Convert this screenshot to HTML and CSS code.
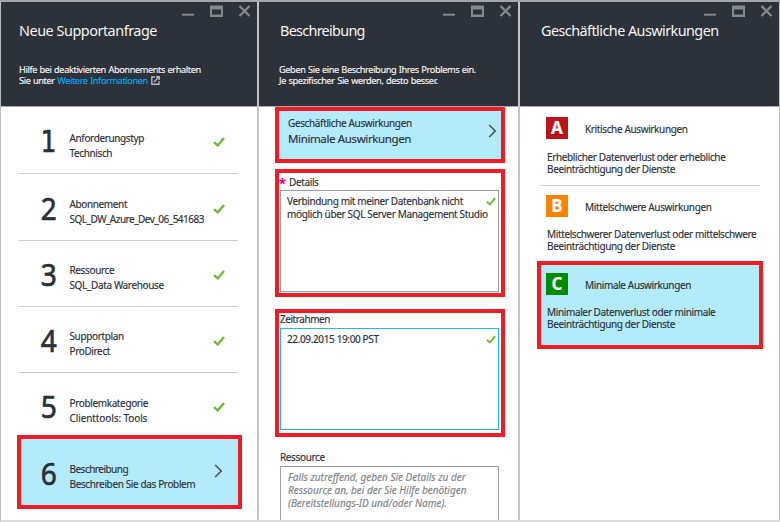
FILE: index.html
```html
<!DOCTYPE html>
<html lang="de">
<head>
<meta charset="utf-8">
<title>Neue Supportanfrage</title>
<link rel="stylesheet" href="styles.css">
</head>
<body>
<svg class="defs" width="0" height="0">
  <symbol id="controls" viewBox="0 0 70 12">
    <path d="M1 9.7h12" stroke="#85888c" stroke-width="2"/>
    <path d="M30 1v10.5h11V1" fill="none" stroke="#85888c" stroke-width="2"/>
    <path d="M29 2.5h13" stroke="#85888c" stroke-width="4"/>
    <path d="M29 10.5h13" stroke="#85888c" stroke-width="2"/>
    <path d="M58.5 1l10 10M68.5 1l-10 10" stroke="#85888c" stroke-width="2.3"/>
  </symbol>
  <symbol id="check" viewBox="0 0 12 10">
    <path d="M1 5.2l3.7 3.2L11 .9" fill="none" stroke="#72b83c" stroke-width="2.4"/>
  </symbol>
  <symbol id="chevron" viewBox="0 0 9 14">
    <path d="M1.2 1l6 6-6 6" fill="none" stroke="#4b565c" stroke-width="1.7"/>
  </symbol>
</svg>
<main class="blades">
  <section class="blade">
    <header class="head">
      <svg class="controls"><use href="#controls"/></svg>
      <h1 class="title">Neue Supportanfrage</h1>
      <p class="intro">Hilfe bei deaktivierten Abonnements erhalten<br>Sie unter <a class="link">Weitere Informationen</a>
        <svg class="ext" viewBox="0 0 9 9"><path d="M4 1H.8v7.2H8V5.2" fill="none" stroke="#b5b8bb" stroke-width="1.4"/><path d="M5 .8h3.2V4M8 1L3 6" fill="none" stroke="#b5b8bb" stroke-width="1.4"/></svg></p>
    </header>
    <ol class="steps">
      <li class="step"><b class="num one">1</b><div class="info"><p>Anforderungstyp</p><p>Technisch</p></div><svg class="check"><use href="#check"/></svg></li>
      <li class="step"><b class="num">2</b><div class="info"><p>Abonnement</p><p class="tight">SQL_DW_Azure_Dev_06_541683</p></div><svg class="check"><use href="#check"/></svg></li>
      <li class="step"><b class="num">3</b><div class="info"><p>Ressource</p><p>SQL_Data Warehouse</p></div><svg class="check"><use href="#check"/></svg></li>
      <li class="step"><b class="num">4</b><div class="info"><p>Supportplan</p><p>ProDirect</p></div><svg class="check"><use href="#check"/></svg></li>
      <li class="step last"><b class="num">5</b><div class="info"><p>Problemkategorie</p><p class="loose">Clienttools: Tools</p></div><svg class="check"><use href="#check"/></svg></li>
      <li class="step current"><b class="num">6</b><div class="info"><p class="tight">Beschreibung</p><p>Beschreiben Sie das Problem</p></div><svg class="chevron"><use href="#chevron"/></svg></li>
    </ol>
  </section>

  <section class="blade">
    <header class="head second">
      <svg class="controls"><use href="#controls"/></svg>
      <h1 class="title narrow">Beschreibung</h1>
      <p class="intro">Geben Sie eine Beschreibung Ihres Problems ein.<br>Je spezifischer Sie werden, desto besser.</p>
    </header>
    <div class="form">
      <div class="impact">
        <div><p>Geschäftliche Auswirkungen</p><p class="value">Minimale Auswirkungen</p></div>
        <svg class="chevron"><use href="#chevron"/></svg>
      </div>
      <div class="field details">
        <label class="label"><span class="star">*</span>Details</label>
        <div class="box"><p>Verbindung mit meiner Datenbank nicht<br><span class="wide">möglich über SQL Server Management Studio</span></p><svg class="tick"><use href="#check"/></svg></div>
      </div>
      <div class="field time">
        <label class="label">Zeitrahmen</label>
        <div class="box focus"><p>22.09.2015 19:00 PST</p><svg class="tick"><use href="#check"/></svg></div>
      </div>
      <div class="field plain">
        <label class="label">Ressource</label>
        <div class="box hint"><p>Falls zutreffend, geben Sie Details zu der<br>Ressource an, bei der Sie Hilfe benötigen<br>(Bereitstellungs-ID und/oder Name).</p></div>
      </div>
    </div>
  </section>

  <section class="blade">
    <header class="head third">
      <svg class="controls"><use href="#controls"/></svg>
      <h1 class="title">Geschäftliche Auswirkungen</h1>
    </header>
    <ul class="levels">
      <li class="level a"><div class="row"><b class="badge">A</b><span>Kritische Auswirkungen</span></div><p>Erheblicher Datenverlust oder erhebliche<br>Beeinträchtigung der Dienste</p></li>
      <li class="level b"><div class="row"><b class="badge">B</b><span>Mittelschwere Auswirkungen</span></div><p>Mittelschwerer Datenverlust oder mittelschwere<br>Beeinträchtigung der Dienste</p></li>
      <li class="level c"><div class="row"><b class="badge">C</b><span>Minimale Auswirkungen</span></div><p>Minimaler Datenverlust oder minimale<br>Beeinträchtigung der Dienste</p></li>
    </ul>
  </section>
</main>
</body>
</html>
```
FILE: styles.css
```css
* { box-sizing: border-box; margin: 0; padding: 0; }
body {
  width: 780px; height: 522px; overflow: hidden; background: #fff;
  font: 10px/15px "Noto Sans", sans-serif; letter-spacing: -.37px; color: #2b3037;
  -webkit-text-stroke-width: .15px;
}
ol, ul { list-style: none; }
svg { display: block; flex: none; }
.defs { position: absolute; }
.blades {
  display: grid; grid-template-columns: 258px 261px 260px; height: 522px;
  border: solid #b9bcbe; border-width: 2px 0 2px 1px; border-top-color: #a4a7aa; border-bottom-color: #dcdcdc; overflow: hidden;
}
.blade { border-right: 2px solid #c4c4c4; overflow: hidden; min-width: 0; }
.blade:last-child { border-right-width: 1px; }

.head {
  height: 105px; margin-right: -2px; padding: 3px 8px 0 18px; background: #2d3139; color: #f4f5f6;
  border: solid #4d5259; border-width: 0 2px 1px 0; border-bottom-color: #a9abae;
  font-size: 9.2px; line-height: 11px; letter-spacing: -.38px; word-spacing: .5px;
}
.blade:last-child .head { margin-right: 0; border-right: 0; }
.head.second { padding-left: 20px; }
.head.third { padding-left: 21px; }
.controls { width: 70px; height: 12px; margin-left: auto; margin-right: -2px; }
.title { margin-top: 3px; font-size: 14.4px; line-height: 22px; font-weight: 400; letter-spacing: -.46px; word-spacing: 0; white-space: nowrap; -webkit-text-stroke-width: 0; }
.title.narrow { letter-spacing: -.7px; padding-left: 1px; }
.third .title { letter-spacing: -.55px; }
.intro { margin-top: 22px; white-space: nowrap; }
.link { color: #00abec; letter-spacing: -.4px; }
.ext { display: inline-block; width: 9px; height: 9px; vertical-align: -1px; margin-left: 1px; }

.steps { padding: 1px 0 0 18px; }
.step {
  display: grid; grid-template-columns: 50.5px 143.5px 12px; height: 66.25px; width: 219px;
  border-bottom: 1px solid #cfcfcf;
}
.step.last { border-bottom: 0; }
.num {
  font-size: 30.5px; line-height: 30px; font-weight: 400; letter-spacing: 0; padding: 18.3px 0 0 21px;
  transform: scaleX(.92); transform-origin: 30px 0; -webkit-text-stroke-width: .7px;
}
.num.one { font-family: "DejaVu Sans Condensed", "DejaVu Sans", sans-serif; font-size: 29.5px; font-stretch: condensed; padding-top: 19px; }
.info { padding-top: 22.7px; white-space: nowrap; }
.tight { letter-spacing: -.51px; }
.loose { letter-spacing: -.1px; }
.check { width: 12px; height: 10px; margin-top: 29.3px; }
.current {
  width: 225px; height: 74px; margin: -4px 0 0 -2px;
  border: 4px solid #ee1c24; background: #b3ebfb; grid-template-columns: 48.5px 143.5px 12px;
}
.current .num { padding-left: 19px; transform-origin: 28px 0; }
.current .chevron { margin: 25px 0 0 1px; }
.chevron { width: 9px; height: 14px; }

.form { display: flex; flex-direction: column; padding-left: 16px; width: 246px; }
.impact {
  height: 56px; display: flex; justify-content: space-between;
  padding: 5px 4px 0 9px; border: 4px solid #ee1c24; background: #b3ebfb; line-height: 15px;
}
.impact .value { font-size: 11.5px; line-height: 16px; letter-spacing: -.37px; }
.impact .chevron { margin-top: 8px; }
.field { display: flex; flex-direction: column; }
.details, .time { border: 4px solid #ee1c24; height: 128px; padding: 0 2px 0 1px; }
.details { margin-top: 6px; }
.time { margin-top: 12px; }
.plain { margin-top: 13px; padding: 0 6px 0 5px; }
.label { line-height: 15px; height: 16px; }
.details .label { height: 17px; padding-top: 2px; }
.time .label { height: 15px; line-height: 13px; letter-spacing: -.44px; }
.star { display: inline-block; width: 9px; color: #ec008c; font-size: 13px; font-weight: 700; line-height: 10px; vertical-align: -2px; margin-left: -1px; margin-right: 1px; }
.box {
  display: flex; justify-content: space-between; height: 102px; padding: 4px 2px 0 6px;
  border: 1px solid #9b9fa3; background: #fff; line-height: 13px; white-space: nowrap;
}
.box.focus { border-color: #1fb8ec; }
.wide { letter-spacing: -.34px; }
.tick { width: 10px; height: 9px; margin: 2px 0 0 -6px; }
.hint { font-style: italic; letter-spacing: -.02px; color: #808386; padding-left: 7px; }

.levels { padding-left: 20px; line-height: 12px; white-space: nowrap; }
.level { width: 220px; padding-left: 6px; }
.level p { padding-left: 1px; margin-top: 11px; }
.row { display: flex; align-items: center; gap: 17px; height: 22px; }
.row span { padding-top: 1px; }
.badge { width: 22px; height: 22px; font-size: 17px; line-height: 21px; text-align: center; color: #fff; letter-spacing: 0; }
.a { height: 79px; padding-top: 10px; border-bottom: 1px solid #cfcfcf; }
.a .badge { background: #ba141a; }
.a p { margin-top: 12px; }
.b { height: 75px; padding-top: 9px; }
.b .badge { background: #ff8200; }
.c { width: 226px; height: 88px; margin-left: -3px; padding: 8px 0 0 5px; border: 4px solid #ee1c24; background: #b3ebfb; }
.c .badge { background: #008a00; }
```
